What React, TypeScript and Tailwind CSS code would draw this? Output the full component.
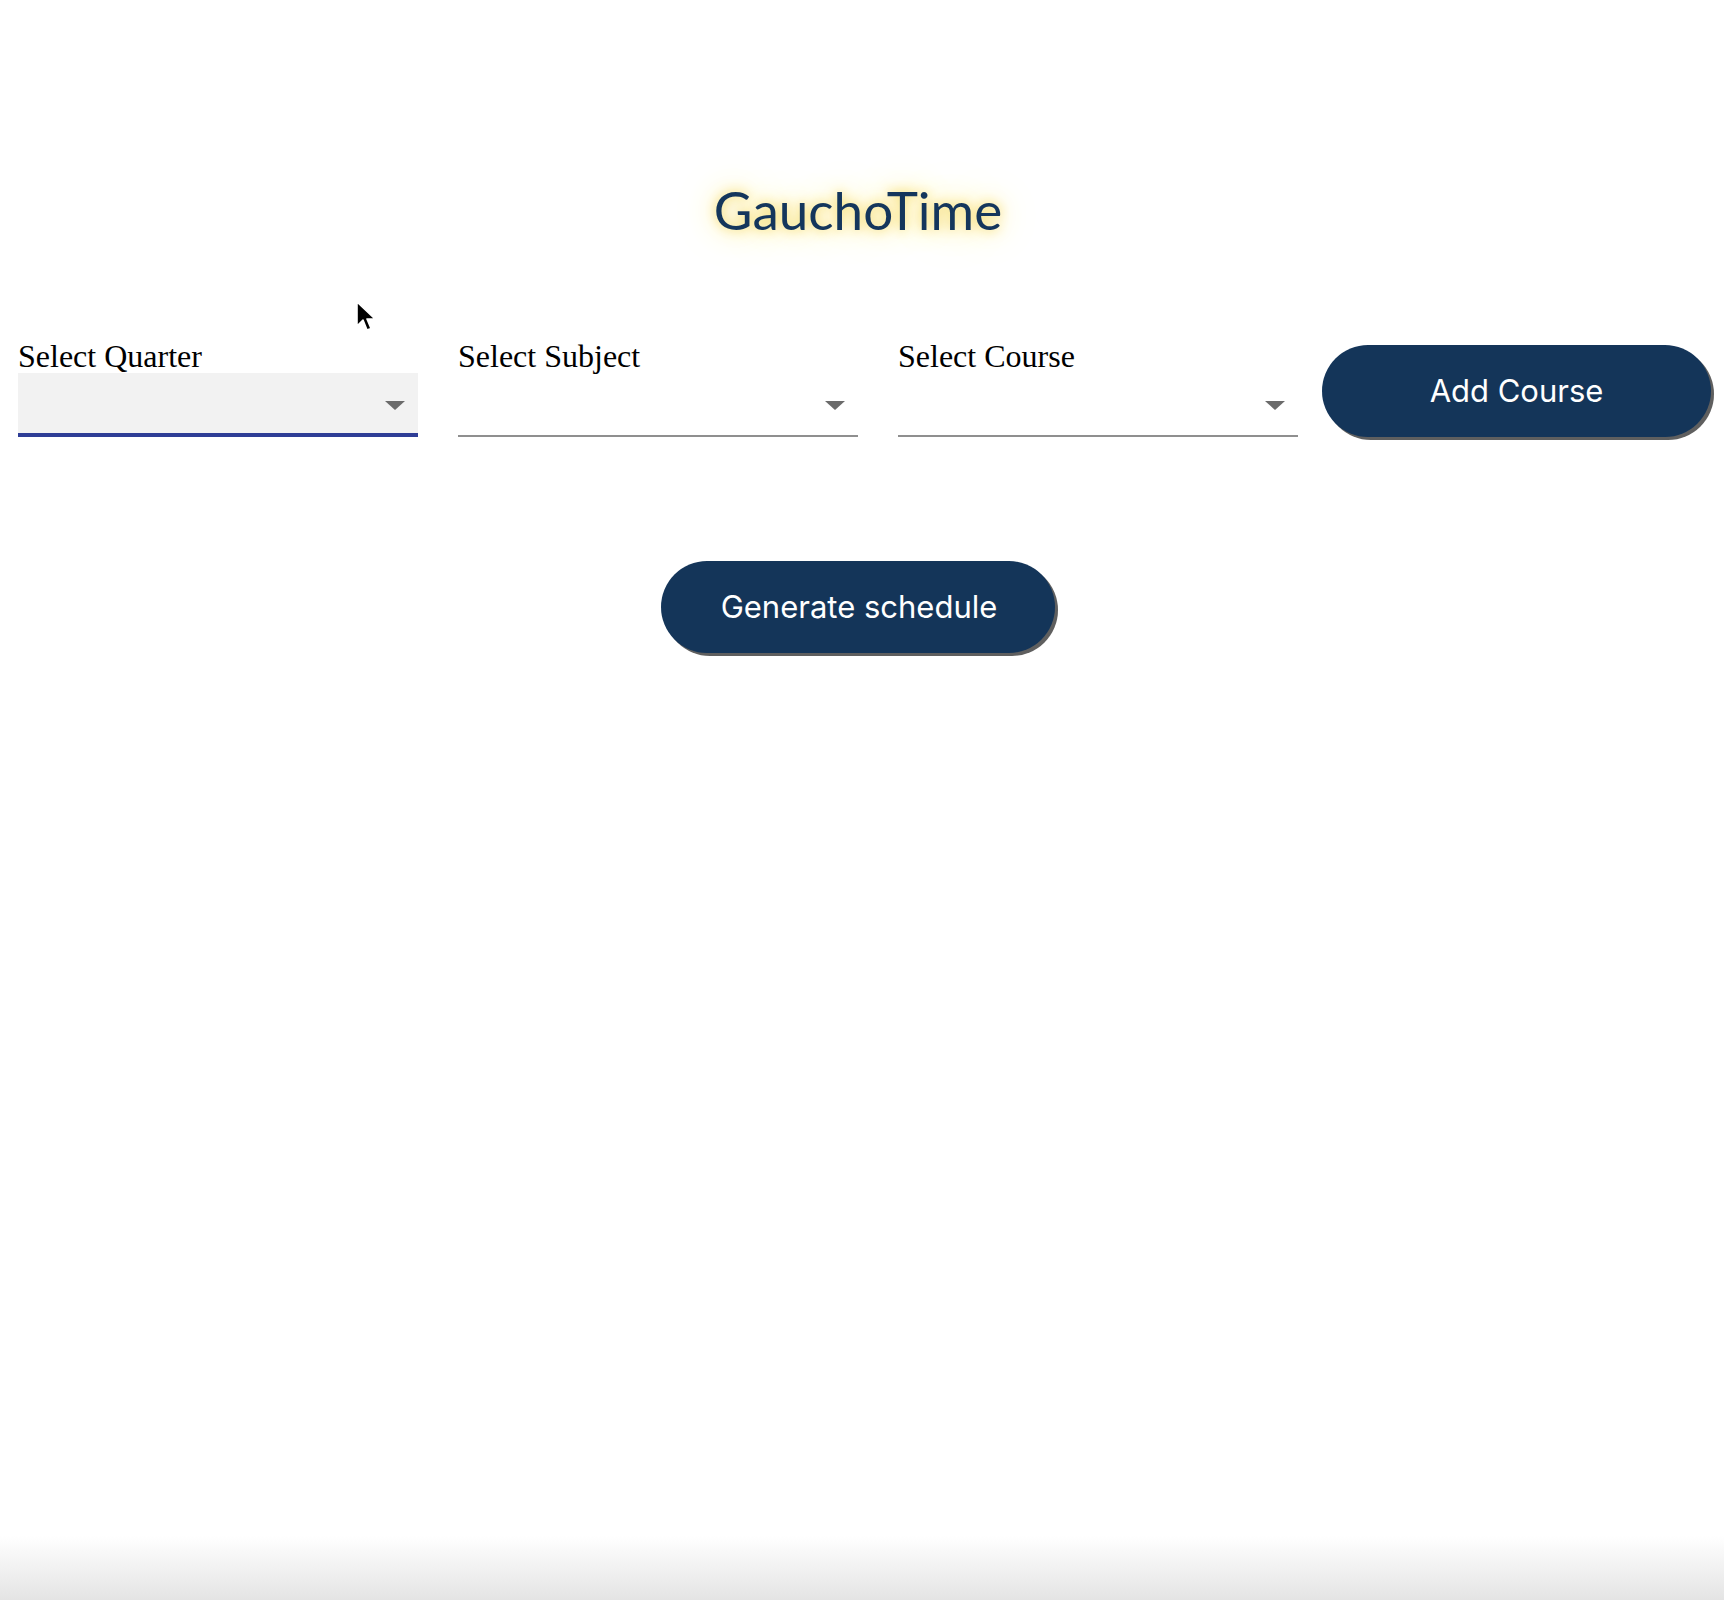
import React, { useState } from 'react';

const selects = ['Select Quarter', 'Select Subject', 'Select Course'];

function Dropdown({ label, active }: { label: string; active?: boolean }) {
  return (
    <div className="w-[400px] flex flex-col gap-[1px]">
      <label className="text-[32px] leading-[34px] text-black font-['Liberation_Serif',serif] translate-y-[1px]">{label}</label>
      <div
        className={`relative h-[64px] ${
          active ? 'bg-[#f2f2f2] border-b-4 border-[#2e3d96]' : 'border-b-2 border-[#8f8f8f]'
        }`}
      >
        {/* caret */}
        <div className="absolute right-[13px] top-[28px] w-0 h-0 border-l-[10px] border-r-[10px] border-t-[9px] border-l-transparent border-r-transparent border-t-[#6b6b6b]" />
      </div>
    </div>
  );
}

export default function App() {
  const [courses, setCourses] = useState<string[]>([]);

  return (
    <div className="relative w-full h-[1600px] bg-white flex flex-col font-['Inter',sans-serif]">
      {/* Title */}
      <div className="flex justify-center pt-[183px] pr-2">
        <h1 className="text-[53px] leading-[54px] text-[#14365c] font-['Lato',sans-serif] font-normal [text-shadow:0_0_12px_#f4d85a,0_0_28px_#fae690,0_0_56px_#fff3c2,0_0_80px_#fffae3]">
          GauchoTime
        </h1>
      </div>

      {/* Selects row */}
      <div className="flex items-start mt-[101px] pl-[18px]">
        <div className="flex gap-[40px]">
          {selects.map((s, i) => (
            <Dropdown key={s} label={s} active={i === 0} />
          ))}
        </div>
        <button
          onClick={() => setCourses(c => [...c, 'course'])}
          className="ml-[24px] mt-[7px] w-[389px] h-[92px] rounded-full bg-[#143559] text-white text-[31px] shadow-[3px_3px_0_#5f5f5f]"
        >
          Add Course
        </button>
      </div>

      {/* Generate */}
      <div className="flex justify-center mt-[124px] pr-2">
        <button className="h-[92px] pl-[60px] pr-[58px] rounded-full bg-[#143559] text-white text-[31px] shadow-[3px_3px_0_#5f5f5f]">
          Generate schedule
        </button>
      </div>

      {courses.length > 0 && <div className="hidden">{courses.length}</div>}

      {/* bottom fade */}
      <div className="mt-auto h-[64px] bg-gradient-to-b from-white to-[#e4e4e4]" />

      {/* mouse pointer */}
      <svg className="absolute left-[355px] top-[301px]" width="22" height="32" viewBox="0 0 22 32">
        <path d="M2 1 L2 25 L8 19 L12 29 L16 27.5 L12 18 L20 18 Z" fill="#000" stroke="#fff" strokeWidth="1.6" strokeLinejoin="round" />
      </svg>
    </div>
  );
}
